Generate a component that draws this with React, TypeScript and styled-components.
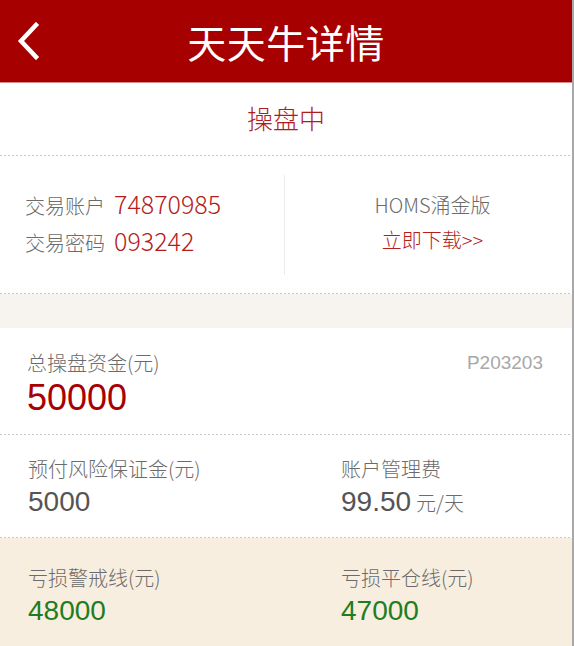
import React from 'react';
import styled, { createGlobalStyle } from 'styled-components';

const Global = createGlobalStyle`
  html, body { margin: 0; padding: 0; background: #ffffff; }
  body { font-family: "Noto Sans CJK SC", "Liberation Sans", sans-serif; }
`;

const Page = styled.div`
  width: 572px;
  height: 646px;
  border-right: 2px solid #a9a9a9;
  background: #ffffff;
  overflow: hidden;
  display: flex;
  flex-direction: column;
`;

const Header = styled.header`
  height: 82px;
  flex: none;
  background: #a60000;
  border-bottom: 1px solid #d88a8a;
  display: grid;
  grid-template-columns: 70px 1fr 70px;
  align-items: center;
`;

const BackButton = styled.button`
  border: none;
  background: transparent;
  padding: 0 0 0 16px;
  height: 40px;
  display: flex;
  align-items: center;
  cursor: pointer;
`;

const Title = styled.h1`
  margin: 0;
  text-align: center;
  color: #ffffff;
  font-size: 39px;
  font-weight: 400;
  line-height: 1;
  letter-spacing: 0.5px;
`;

const Status = styled.div`
  height: 72px;
  flex: none;
  display: flex;
  align-items: center;
  justify-content: center;
  padding-bottom: 3px;
  box-sizing: border-box;
  color: #b01d1d;
  font-size: 26px;
  font-weight: 300;
`;

const Dotted = styled.div`
  height: 1px;
  flex: none;
  background-image: repeating-linear-gradient(to right, #c8c8c8 0 2px, transparent 2px 4px);
`;

const Account = styled.section`
  height: 137px;
  flex: none;
  display: flex;
  align-items: center;
`;

const AccountLeft = styled.div`
  width: 284px;
  box-sizing: border-box;
  padding: 0 0 8px 25px;
  display: flex;
  flex-direction: column;
  gap: 2px;
`;

const AccountRow = styled.div`
  display: flex;
  align-items: baseline;
  height: 35px;
`;

const AccountLabel = styled.span`
  font-size: 20px;
  font-weight: 300;
  color: #6b6b6b;
  margin-right: 9px;
`;

const AccountValue = styled.span`
  font-size: 25px;
  font-weight: 300;
  color: #b51c1c;
`;

const VDivider = styled.div`
  width: 1px;
  height: 100px;
  background: #ececec;
`;

const AccountRight = styled.div`
  flex: 1;
  display: flex;
  flex-direction: column;
  align-items: center;
  gap: 6px;
  padding: 0 0 5px 8px;
`;

const AppName = styled.div`
  font-size: 20px;
  font-weight: 300;
  color: #6b6b6b;
`;

const DownloadLink = styled.a`
  font-size: 20px;
  font-weight: 300;
  color: #b51c1c;
  text-decoration: none;
`;

const Gap = styled.div`
  height: 34px;
  flex: none;
  background: #f7f3ee;
`;

const Total = styled.section`
  height: 106px;
  flex: none;
  box-sizing: border-box;
  padding: 21px 29px 0 27px;
`;

const TotalTop = styled.div`
  display: flex;
  justify-content: space-between;
  align-items: center;
  height: 28px;
`;

const Label = styled.div`
  font-size: 20px;
  font-weight: 300;
  line-height: 28px;
  color: #6b6b6b;
`;

const Code = styled.div`
  font-family: "Liberation Sans", sans-serif;
  font-size: 19px;
  color: #a8a8a8;
`;

const BigValue = styled.div`
  font-family: "Liberation Sans", sans-serif;
  font-size: 36px;
  line-height: 42px;
  color: #a80000;
`;

const Grid = styled.section<{ $bg: string; $top: number; $h: number }>`
  height: ${p => p.$h}px;
  flex: none;
  box-sizing: border-box;
  background: ${p => p.$bg};
  padding: ${p => p.$top}px 0 0 28px;
  display: grid;
  grid-template-columns: 313px 1fr;
  align-content: start;
`;

const Cell = styled.div`
  display: flex;
  flex-direction: column;
`;

const Value = styled.div<{ $color: string }>`
  font-family: "Liberation Sans", sans-serif;
  font-size: 28px;
  line-height: 38px;
  color: ${p => p.$color};
`;

const Unit = styled.span`
  font-family: "Noto Sans CJK SC", sans-serif;
  font-size: 20px;
  font-weight: 300;
  color: #6b6b6b;
  margin-left: 5px;
`;

function BackIcon() {
  return (
    <svg width="26" height="38" viewBox="0 0 26 38" fill="none">
      <polyline points="20,3 5,19 20,35" stroke="#ffffff" strokeWidth="4.5" strokeLinecap="square" strokeLinejoin="miter" />
    </svg>
  );
}

export default function App() {
  return (
    <>
      <Global />
      <Page>
        <Header>
          <BackButton aria-label="返回">
            <BackIcon />
          </BackButton>
          <Title>天天牛详情</Title>
          <span />
        </Header>
        <Status>操盘中</Status>
        <Dotted />
        <Account>
          <AccountLeft>
            <AccountRow>
              <AccountLabel>交易账户</AccountLabel>
              <AccountValue>74870985</AccountValue>
            </AccountRow>
            <AccountRow>
              <AccountLabel>交易密码</AccountLabel>
              <AccountValue>093242</AccountValue>
            </AccountRow>
          </AccountLeft>
          <VDivider />
          <AccountRight>
            <AppName>HOMS涌金版</AppName>
            <DownloadLink href="#">立即下载&gt;&gt;</DownloadLink>
          </AccountRight>
        </Account>
        <Dotted />
        <Gap />
        <Total>
          <TotalTop>
            <Label>总操盘资金(元)</Label>
            <Code>P203203</Code>
          </TotalTop>
          <BigValue>50000</BigValue>
        </Total>
        <Dotted />
        <Grid $bg="#ffffff" $top={20} $h={102}>
          <Cell>
            <Label>预付风险保证金(元)</Label>
            <Value $color="#555555">5000</Value>
          </Cell>
          <Cell>
            <Label>账户管理费</Label>
            <Value $color="#555555">99.50<Unit>元/天</Unit></Value>
          </Cell>
        </Grid>
        <Dotted />
        <Grid $bg="#f8eedf" $top={26} $h={108}>
          <Cell>
            <Label>亏损警戒线(元)</Label>
            <Value $color="#1f7d1f">48000</Value>
          </Cell>
          <Cell>
            <Label>亏损平仓线(元)</Label>
            <Value $color="#1f7d1f">47000</Value>
          </Cell>
        </Grid>
      </Page>
    </>
  );
}
